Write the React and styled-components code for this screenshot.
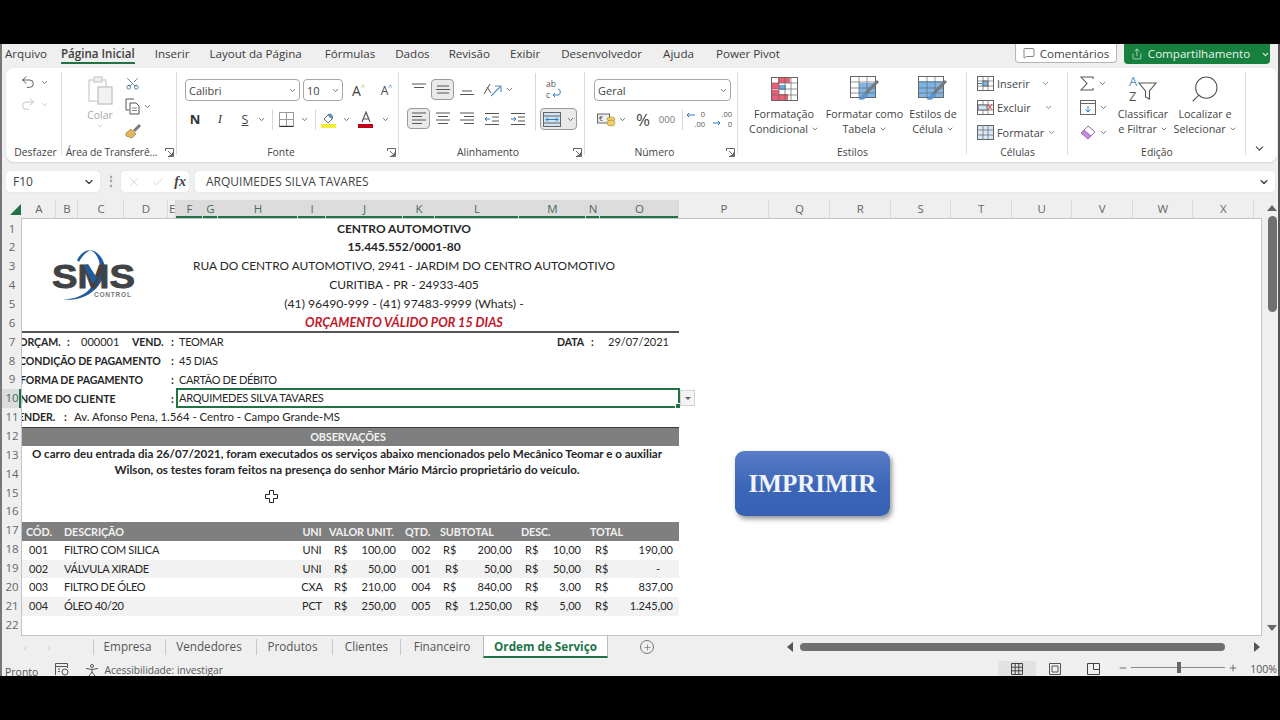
import React from "react";
import styled, { createGlobalStyle } from "styled-components";
import { ChevronDown, Undo2, Redo2, Scissors, X, Check, Search, Plus, Minus, MessageSquare, Share } from "lucide-react";

const Global = createGlobalStyle`
  html, body { margin: 0; padding: 0; background: #000; width: 1280px; height: 720px; overflow: hidden; }
  body { font-family: "Open Sans", "Liberation Sans", sans-serif; }
  * { box-sizing: border-box; }
`;

const Screen = styled.div`
  width: 1280px; height: 720px; background: #000; padding-top: 44px;
`;
const Win = styled.div`
  width: 1280px; height: 632px; background: #efefef; border-left: 2px solid #777; border-right: 2px solid #555; overflow: hidden;
  display: flex; flex-direction: column; position: relative;
`;

/* ---------- top tabs ---------- */
const TabBar = styled.div`
  height: 24px; display: flex; align-items: flex-start; padding-left: 3px; flex: none;
`;
const MenuTab = styled.div`
  height: 20px; line-height: 19px; margin-right: ${p => p.$gap ?? 20}px; font-size: 11.6px; color: #3c3c3c; white-space: nowrap;
  font-weight: ${p => (p.$active ? 600 : 400)};
  border-bottom: ${p => (p.$active ? "2px solid #217346" : "2px solid transparent")};
`;
const TopActions = styled.div`
  margin-left: auto; margin-right: 8px; display: flex; gap: 7px; height: 20px;
`;
const CommentBtn = styled.div`
  width: 102px; height: 19px; background: #fff; border: 1px solid #b5b5b5; border-top: 0; border-radius: 0 0 4px 4px;
  display: flex; align-items: center; justify-content: center; gap: 5px; font-size: 11.6px; color: #444;
`;
const ShareBtn = styled.div`
  width: 146px; height: 20px; background: #17803f; border-radius: 0 0 4px 4px; color: #e6f4ea; line-height: 18px;
  display: flex; align-items: center; padding-left: 7px; gap: 5px; font-size: 11.6px;
`;

/* ---------- ribbon ---------- */
const Ribbon = styled.div`
  height: 94px; margin: 0 1px 0 4px; background: #fff; border-radius: 8px; display: flex; padding: 4px 0 2px; flex: none;
  box-shadow: 0 1px 2px rgba(0,0,0,.12);
`;
const Group = styled.div`
  width: ${p => p.$w}px; flex: none; display: flex; flex-direction: column; position: relative;
  &::after {
    content: ""; position: absolute; right: 0; top: 0; width: 1px; height: 83px;
    background: ${p => (p.$noline ? "transparent" : "#dedede")};
  }
`;
const GroupBody = styled.div`
  flex: 1; display: flex; min-height: 0;
  padding-left: ${p => p.$pl ?? 0}px; gap: ${p => p.$gap ?? 0}px;
`;
const GroupLabel = styled.div`
  height: 16px; line-height: 17px; font-size: 10.4px; color: #444; text-align: center; white-space: nowrap; position: relative;
  padding-right: ${p => p.$pr ?? 0}px; padding-left: ${p => p.$pl ?? 0}px; letter-spacing: ${p => p.$ls ?? 0}px;
`;
const LauncherWrap = styled.span`
  position: absolute; right: 3px; top: 4px; display: inline-flex; line-height: 0;
`;
const Stack = styled.div`
  display: flex; flex-direction: column; align-items: ${p => p.$align ?? "flex-start"};
  gap: ${p => p.$gap ?? 0}px; padding-top: ${p => p.$pt ?? 0}px; width: ${p => (p.$w ? p.$w + "px" : "auto")};
  margin-left: ${p => p.$ml ?? 0}px; flex: none;
`;
const Line = styled.div`
  display: flex; align-items: center; height: ${p => p.$h ?? 22}px; gap: ${p => p.$gap ?? 0}px; margin-left: ${p => p.$ml ?? 0}px;
`;
const TextLine = styled(Line)`
  font-size: 10.9px; color: #444;
`;
const Slot = styled.span`
  display: inline-flex; align-items: center; justify-content: center; flex: none;
  width: ${p => p.$w ?? 24}px; height: ${p => p.$h ?? 21}px; color: ${p => p.$c ?? "#444"};
  font-size: ${p => p.$fs ?? 12}px; font-weight: ${p => p.$fw ?? 400};
  font-family: ${p => p.$ff ?? "inherit"}; font-style: ${p => p.$fst ?? "normal"};
  border-radius: 4px;
  background: ${p => (p.$on ? "#e9e9e9" : "transparent")};
  border: ${p => (p.$on ? "1px solid #9a9a9a" : "0")};
`;
const Vsep = styled.span`
  width: 1px; height: 21px; background: #d8d8d8; flex: none; margin-left: ${p => p.$l ?? 0}px; margin-right: ${p => p.$r ?? 0}px;
`;
const TallSep = styled(Vsep)`
  height: 58px; margin-top: 1px;
`;
const Combo = styled.div`
  width: ${p => p.$w}px; height: 22px; border: 1px solid #a8a8a8; border-radius: 4px; background: #fff; font-size: 11px; color: #444;
  display: flex; align-items: center; justify-content: space-between; padding: 0 2px 0 3px; flex: none;
`;
const Big = styled.div`
  width: ${p => p.$w}px; flex: none; display: flex; flex-direction: column; align-items: center; font-size: 10.8px; color: #444; line-height: 15px; text-align: center; white-space: nowrap;
  margin-left: ${p => p.$ml ?? 0}px;
`;
const BigIcon = styled.div`
  height: 34px; display: flex; align-items: center; justify-content: center; flex: none;
`;
const Faded = styled.span`
  color: #a8a8a8; font-size: 10.5px; line-height: 14px; margin-top: 3px;
`;
const Gap = styled.span`
  display: inline-block; width: ${p => p.$w}px; flex: none;
`;
const Chev = ({ s = 9, c = "#444", sw = 2 }) => <ChevronDown size={s} color={c} strokeWidth={sw} />;
const Launcher = () => (
  <svg width="9" height="9" viewBox="0 0 9 9" fill="none" stroke="#666"><path d="M.5 3V.5H8.5V8.5H3M3 3L7.5 7.5M7.5 4.5V7.5H4.5" /></svg>
);
const Paste = () => (
  <svg width="28" height="30" viewBox="0 0 28 30" fill="none" stroke="#d2d2d2" strokeWidth="1.4">
    <path d="M3 5h5M16 5h4v7M3 5v21h8" /><rect x="8" y="2" width="8" height="5" fill="#eee" /><rect x="12" y="12" width="14" height="17" fill="#f1f1f1" stroke="#c6c6c6" />
  </svg>
);
const Copy = () => (
  <svg width="16" height="17" viewBox="0 0 16 17" fill="none" stroke="#555"><path d="M9 1H1v11h3" /><path d="M5 5h6l3 3v8H5z" /><path d="M7 10h5M7 12.5h5" stroke="#888" /></svg>
);
const Brush = () => (
  <svg width="17" height="16" viewBox="0 0 17 16"><path d="M1 10l5-4 5 5-4 4-6-2z" fill="#e2b65c" stroke="#a0793a" strokeWidth=".7" /><path d="M8 7l6-6 2 2-6 6z" fill="#777" /></svg>
);
const FontGrow = ({ sz, mark }) => (
  <Slot $w={25} $fs={sz} $c="#444">A<small style={{ fontSize: 7, alignSelf: "flex-start", marginTop: 3, color: mark }}>{"^"}</small></Slot>
);
const Borders = () => (
  <svg width="15" height="15" viewBox="0 0 15 15" fill="none" stroke="#999"><path d="M.5.5h14v14H.5zM7.5.5v14M.5 7.5h14" /><path d="M.5 14.5h14" stroke="#333" strokeWidth="1.4" /></svg>
);
const Fill = () => (
  <svg width="16" height="17" viewBox="0 0 16 17"><path d="M3 8l5-5 4 4-5 5z" fill="none" stroke="#666" /><path d="M9 2l3 3-1 3-4-3z" fill="#5e8bbd" /><rect x="0" y="13" width="15" height="4" fill="#f4ee3c" /></svg>
);
const TextColor = () => (
  <svg width="16" height="17" viewBox="0 0 16 17"><path d="M4 11L8 1l4 10M5.5 8h5" fill="none" stroke="#555" strokeWidth="1.2" /><rect x="0" y="13" width="15" height="4" fill="#c00018" /></svg>
);
const Lines = ({ kind, c = "#555" }) => {
  const sets = {
    top: ["1,2,15", "3,5.5,13"],
    mid: ["2,4,14", "1,7.5,15", "2,11,14"],
    bottom: ["3,9,13", "1,12.5,15"],
    left: ["1,2,15", "1,5.5,11", "1,9,15", "1,12.5,11"],
    center: ["1,2,15", "3,5.5,13", "1,9,15", "3,12.5,13"],
    right: ["1,2,15", "5,5.5,15", "1,9,15", "5,12.5,15"],
  };
  return (
    <svg width="16" height="15" viewBox="0 0 16 15" stroke={c} strokeWidth="1" fill="none">
      {sets[kind].map(s => { const [a, y, b] = s.split(",").map(Number); return <path key={s} d={`M${a} ${y}H${b}`} />; })}
    </svg>
  );
};
const Indent = ({ flip }) => (
  <svg width="16" height="14" viewBox="0 0 16 14" fill="none" stroke="#555"><path d="M1 1.5h14M8 5h7M8 9h7M1 12.5h14" /><path d={flip ? "M1 7h5M4 5l2 2-2 2" : "M6 7H1M3 5L1 7l2 2"} stroke="#2b7cc2" /></svg>
);
const Orient = () => (
  <svg width="20" height="18" viewBox="0 0 20 18" fill="none" stroke="#555"><path d="M2 13L8 3M5 6l4 6" /><path d="M9 15L18 6M13 5h6v6" stroke="#4d8fc7" strokeWidth="1.1" /></svg>
);
const Wrap = () => (
  <svg width="17" height="21" viewBox="0 0 17 21"><text x="1" y="8" fontSize="8.5" fontFamily="Open Sans" fill="#555">ab</text><text x="1" y="19" fontSize="8.5" fontFamily="Open Sans" fill="#555">c</text><path d="M8 16h5c3 0 3-6 0-6" fill="none" stroke="#2b7cc2" /><path d="M10 14l-2 2 2 2" fill="none" stroke="#2b7cc2" /></svg>
);
const Merge = () => (
  <svg width="18" height="15" viewBox="0 0 18 15" fill="none" stroke="#666"><rect x=".5" y=".5" width="17" height="14" fill="#cfe3f5" /><path d="M.5 4h17M.5 11h17" /><path d="M3 7.5h12M5 5.5l-2 2 2 2M13 5.5l2 2-2 2" stroke="#2b7cc2" /></svg>
);
const Accounting = () => (
  <svg width="19" height="15" viewBox="0 0 19 15"><rect x=".5" y="2" width="12" height="9" fill="#eee" stroke="#666" /><text x="2" y="9" fontSize="7" fill="#444" fontFamily="Open Sans">€</text><ellipse cx="14" cy="7" rx="4" ry="2" fill="#f2cf6a" stroke="#a68327" strokeWidth=".6" /><ellipse cx="14" cy="11" rx="4" ry="3" fill="#f2cf6a" stroke="#a68327" strokeWidth=".6" /></svg>
);
const Dec = ({ up }) => (
  <svg width="22" height="19" viewBox="0 0 22 19" fontFamily="Open Sans" fontSize="7.5" fill="#555">
    <text x="21" y="7" textAnchor="end">{up ? ".00" : "0"}</text><text x="21" y="17" textAnchor="end">{up ? "0" : ".00"}</text>
    {up ? <path d="M2 13h7M7 11l2 2-2 2" fill="none" stroke="#2b7cc2" /> : <path d="M11 5H3M5 3L3 5l2 2" fill="none" stroke="#2b7cc2" />}
  </svg>
);
const CondFormat = () => (
  <svg width="27" height="24" viewBox="0 0 27 24" fill="none">
    <rect x=".5" y=".5" width="26" height="23" fill="#fff" stroke="#666" />
    <rect x="7" y="1" width="12" height="5" fill="#ea5f75" /><rect x="1" y="6" width="7" height="6" fill="#ea5f75" /><rect x="8" y="8" width="7" height="5" fill="#6ea8dc" /><rect x="1" y="13" width="7" height="4" fill="#ea5f75" /><rect x="1" y="17" width="16" height="6" fill="#ea5f75" />
    <path d="M.5 6h26M.5 12h26M.5 18h26M8 .5v23M14 .5v23M20 .5v23" stroke="#666" strokeWidth=".7" />
  </svg>
);
const TableFormat = ({ cell }) => (
  <svg width="30" height="26" viewBox="0 0 30 26" fill="none">
    <rect x=".5" y=".5" width="25" height="21" fill={cell ? "#7db5e6" : "#fff"} stroke="#666" />
    {cell ? <rect x="1" y="1" width="24" height="4" fill="#fff" /> : <rect x="9" y="7" width="16" height="14" fill="#7db5e6" />}
    <path d="M.5 6h25M.5 12h25M.5 17h25M9 .5v21M17 .5v21" stroke="#666" strokeWidth=".7" />
    <path d="M28 5L15 18" stroke="#777" strokeWidth="3" /><path d="M15 17c-4 0-3 5-7 6 4 2 9 0 9-4z" fill="#5795cf" />
  </svg>
);
const CellIcon = ({ type }) => (
  <svg width="17" height="15" viewBox="0 0 17 15" fill="none" stroke="#666">
    <rect x=".5" y=".5" width="16" height="14" fill={type === "fmt" ? "#d6e7f6" : "#fff"} />
    <path d="M.5 5h16M.5 10h16M6 .5v14M11 .5v14" strokeWidth=".7" />
    {type === "ins" && <><rect x="6" y="5" width="5" height="5" fill="#7db5e6" /><path d="M1 7.5h4" stroke="#2b7cc2" /></>}
    {type === "del" && <><rect x="1" y="5" width="9" height="5" fill="#cfe3f5" /><path d="M11 4l4 6M15 4l-4 6" stroke="#d0464f" /></>}
  </svg>
);
const Sigma = () => (
  <svg width="14" height="15" viewBox="0 0 14 15" fill="none" stroke="#555" strokeWidth="1.1"><path d="M13 3V1H1l6 6.5L1 14h12v-2" /></svg>
);
const FillDown = () => (
  <svg width="16" height="15" viewBox="0 0 16 15" fill="none" stroke="#666"><rect x=".5" y=".5" width="15" height="14" /><path d="M.5 3.5h15" /><path d="M8 6v6M5.5 9.5L8 12l2.5-2.5" stroke="#2b7cc2" /></svg>
);
const Eraser = () => (
  <svg width="16" height="15" viewBox="0 0 16 15"><path d="M8 1l7 6-7 7-7-6z" fill="#c48ad8" stroke="#8b4aa3" strokeWidth=".7" /><path d="M8 1l7 6-4 4-7-6z" fill="#fff" stroke="#8b4aa3" strokeWidth=".7" /></svg>
);
const SortIcon = () => (
  <svg width="30" height="30" viewBox="0 0 30 30" fill="none">
    <text x="1" y="12" fontSize="13" fontFamily="Open Sans" fill="#5b8fc4">A</text>
    <text x="1" y="27" fontSize="13" fontFamily="Open Sans" fill="#555">Z</text>
    <path d="M11 9h17l-6.5 8v8l-4-2v-6z" stroke="#555" strokeWidth="1.1" />
  </svg>
);

/* ---------- formula bar ---------- */
const FormulaBar = styled.div`
  margin-top: 9px; height: 21px; display: flex; align-items: stretch; padding-left: 4px; padding-right: 3px; flex: none;
`;
const Box = styled.div`
  background: #fff; border-radius: 4px; display: flex; align-items: center; width: ${p => (p.$w ? p.$w + "px" : "auto")}; flex: ${p => (p.$grow ? 1 : "none")};
  padding: 0 ${p => p.$pr ?? 5}px 0 ${p => p.$pl ?? 7}px; font-size: 12px; color: #444; justify-content: space-between;
  margin-left: ${p => p.$ml ?? 0}px;
  box-shadow: 0 0 1px rgba(0,0,0,.2);
`;
const Dots = styled.div`
  width: 21px; flex: none; text-align: center; color: #999; font-size: 12px; font-weight: 700; line-height: 19px;
`;
const Fx = styled.span`
  font-family: "Liberation Serif", serif; font-style: italic; font-weight: 700; font-size: 14px; color: #444;
`;

/* ---------- sheet ---------- */
const COLS = "34px 22px 46px 44px 8px 27px 15px 80px 28px 77px 32px 84px 67px 14px 79px 90px 61px 60.5px 60.5px 60.5px 60.5px 60.5px 60.5px 60.5px 8px";
const ROW_H = 18.86;
const GRID_ROW_H = 18.9;
const SheetArea = styled.div`
  margin-top: 8px; height: 436px; display: flex; flex: none;
`;
const SheetMain = styled.div`
  width: 1260px; display: flex; flex-direction: column; flex: none;
`;
const ColHead = styled.div`
  height: 18px; display: flex; flex: none;
`;
const Corner = styled.div`
  width: 20px; flex: none; display: flex; align-items: center; justify-content: flex-end; padding-right: 1px;
`;
const ColTrack = styled.div`
  display: grid; grid-template-columns: ${COLS}; flex: 1;
`;
const ColCell = styled.div`
  font-size: 11.5px; line-height: 18px; text-align: center; color: ${p => (p.$sel ? "#4d6b58" : "#666")};
  background: ${p => (p.$sel ? "#dcdcdc" : "transparent")};
  box-shadow: ${p => (p.$sel ? "inset 0 -2px 0 #217346" : "none")};
  border-right: 1px solid #dadada; padding-left: 1px;
  overflow: hidden;
`;
const SheetBody = styled.div`
  flex: 1; display: flex; min-height: 0;
`;
const RowHead = styled.div`
  width: 19px; flex: none; padding-top: 1.5px;
`;
const RowNum = styled.div`
  height: ${ROW_H}px; line-height: ${ROW_H}px; font-size: 11.5px; color: ${p => (p.$sel ? "#3d6b50" : "#666")}; text-align: center; padding-left: 1px;
  background: ${p => (p.$sel ? "#dcdcdc" : "transparent")};
  box-shadow: ${p => (p.$sel ? "inset -2px 0 0 #217346" : "none")};
`;
const Grid = styled.div`
  flex: 1; background: #fff; border: 1px solid #c4c4c4; position: relative; overflow: hidden;
  display: grid; grid-template-columns: ${COLS}; grid-template-rows: repeat(23, ${GRID_ROW_H}px);
  padding-top: .5px;
  font-family: Lato, Carlito, sans-serif; font-size: 11px; color: #262626;
`;
const Cell = styled.div`
  grid-column: ${p => p.$col}; grid-row: ${p => p.$row};
  white-space: nowrap; line-height: ${ROW_H}px; font-weight: ${p => (p.$b ? 700 : 400)};
  text-align: ${p => p.$align ?? "left"};
  padding-left: ${p => p.$pl ?? 0}px; padding-right: ${p => p.$pr ?? 0}px;
  margin-left: ${p => p.$ml ?? 0}px;
  color: ${p => p.$color ?? "inherit"};
  font-size: ${p => (p.$fs ? p.$fs + "px" : "inherit")};
  font-style: ${p => (p.$i ? "italic" : "normal")};
  letter-spacing: ${p => p.$ls ?? 0}px;
`;
const TitleCell = styled(Cell)`
  grid-column: 1 / 16; text-align: center; padding-left: 107px; line-height: 17.5px;
`;
const FieldLabel = styled(Cell)`
  font-weight: 700; font-size: 10.6px; letter-spacing: -.1px; word-spacing: ${p => p.$ws ?? 0}px;
`;
const Band = styled.div`
  grid-column: 1 / 16; grid-row: ${p => p.$row}; background: ${p => p.$bg};
  border-top: ${p => (p.$line ? "1px solid #3c3c3c" : "0")};
`;
const Rule = styled.div`
  grid-column: 1 / 16; grid-row: ${p => p.$row}; align-self: end; height: 2px; background: #555;
`;
const White = styled(Cell)`color: #f1f1f1; font-size: 10.8px; font-weight: 700; letter-spacing: -.1px; line-height: 19px;`;
const LogoCell = styled.div`
  grid-column: 1 / 7; grid-row: 1 / 7; padding: 26px 0 0 28px;
`;
const Selection = styled.div`
  grid-column: 6 / 16; grid-row: 10; border: 2px solid #217346; margin: -1.5px -1px 0 0; padding-left: 1px; line-height: 15px; position: relative;
  overflow: visible; white-space: nowrap; letter-spacing: -.25px;
`;
const Handle = styled.span`
  position: absolute; right: -3px; bottom: -3px; width: 6px; height: 6px; background: #217346; border: 1px solid #fff;
`;
const Dropdown = styled.span`
  position: absolute; left: 100%; margin-left: 2px; top: 0; width: 15px; height: 16px; background: #f4f4f4; border: 1px solid #d4d4d4;
  display: flex; align-items: center; justify-content: center;
`;
const Tri = styled.span`
  width: 0; height: 0; border-left: 3px solid transparent; border-right: 3px solid transparent; border-top: 3px solid #666;
`;
const Notes = styled.div`
  grid-column: 1 / 16; grid-row: 13 / 16; text-align: center; font-weight: 700; line-height: 16px; padding: 0 7px 0 0; font-size: 11.58px;
  white-space: nowrap;
`;
const PrintSlot = styled.div`
  grid-column: 16 / 19; grid-row: 13 / 17; padding: 5px 0 0 56px;
`;
const PrintBtn = styled.div`
  width: 155px; height: 65px; border-radius: 9px; background: linear-gradient(#5a7cc6, #3b66b8 55%, #3861b3);
  color: #f1f5fb; font-family: "Liberation Serif", serif; font-weight: 700; font-size: 25px; display: flex; align-items: center; justify-content: center;
  box-shadow: 2px 3px 5px rgba(60,60,60,.55);
`;
const CursorMark = styled.div`
  position: absolute; left: 243px; top: 271px; line-height: 0;
`;
const VScroll = styled.div`
  width: 16px; flex: none; display: flex; flex-direction: column; align-items: center; padding-left: 4px;
`;
const Arrow = styled.span`
  width: 0; height: 0; flex: none;
  margin-top: ${p => p.$mt ?? 0}px; margin-bottom: ${p => p.$mb ?? 0}px;
  ${p => p.$dir === "up" && `border-left:5px solid transparent;border-right:5px solid transparent;border-bottom:6px solid #666;`}
  ${p => p.$dir === "down" && `border-left:5px solid transparent;border-right:5px solid transparent;border-top:6px solid #666;`}
  ${p => p.$dir === "left" && `border-top:5px solid transparent;border-bottom:5px solid transparent;border-right:6px solid #555;`}
  ${p => p.$dir === "right" && `border-top:5px solid transparent;border-bottom:5px solid transparent;border-left:6px solid #555;`}
`;
const VThumb = styled.div`
  width: 9px; height: 96px; background: #707070; border-radius: 5px; margin-top: 5px;
`;
const VSpace = styled.div`flex: 1;`;

/* ---------- sheet tabs ---------- */
const SheetTabs = styled.div`
  height: 22px; display: flex; align-items: center; flex: none; font-size: 11.7px; color: #555;
`;
const NavArrows = styled.div`
  width: 91px; flex: none; display: flex; gap: 21px; padding-left: 22px; color: #c4c4c4; font-size: 9px;
`;
const SheetTab = styled.div`
  height: 22px; line-height: 21px; width: ${p => p.$w}px; text-align: center; flex: none; white-space: nowrap;
  padding-right: ${p => p.$pr ?? 0}px;
  ${p => p.$active ? `
    background: #fff; color: #217346; font-weight: 700; border: 1px solid #bbb; border-top: 0; border-bottom: 2px solid #217346;
  ` : ""}
`;
const TabSep = styled.span`
  width: 1px; height: 16px; background: #c8c8c8; flex: none;
`;
const PlusCircle = styled.div`
  width: 14px; height: 14px; border: 1px solid #777; border-radius: 50%; margin-left: 32px; display: flex; align-items: center; justify-content: center; flex: none;
`;
const HScroll = styled.div`
  margin-left: auto; display: flex; align-items: center; margin-right: 18px; flex: none;
`;
const HThumb = styled.div`
  width: 425px; height: 8px; background: #707070; border-radius: 4px; margin: 0 29px 0 7px;
`;

/* ---------- status bar ---------- */
const StatusBar = styled.div`
  height: 18px; display: flex; font-size: 10.5px; color: #555; padding-left: 3px; flex: none;
`;
const StatusText = styled.span`
  line-height: ${p => p.$lh ?? 24}px; font-size: ${p => p.$fs ?? 10.2}px; margin-left: ${p => p.$ml ?? 0}px; white-space: nowrap; color: ${p => p.$c ?? "#555"};
`;
const StatusIcon = styled.span`
  margin-left: ${p => p.$ml ?? 0}px; padding-top: 5px; line-height: 0; flex: none;
`;
const ViewBtns = styled.div`
  margin-left: auto; display: flex; align-items: flex-end; margin-right: 1px;
`;
const ViewBtn = styled.div`
  width: 38px; height: 15px; display: flex; align-items: flex-start; justify-content: center; background: ${p => (p.$on ? "#e2e2e2" : "transparent")};
  padding-top: 2px; flex: none;
`;
const ZoomTrack = styled.div`
  width: 94px; height: 1px; background: #888; position: relative; margin: 0 3px 8px 3px;
`;
const ZoomKnob = styled.span`
  position: absolute; left: 46px; top: -5px; width: 4px; height: 11px; background: #666;
`;

const colNames = "A B C D E F G H I J K L M N O P Q R S T U V W X".split(" ");
const selCols = new Set("F G H I J K L M N O".split(" "));

const Data = [
  { r: 18, code: "001", d: "FILTRO COM SILICA", u: "UNI", v: "100,00", q: "002", s: "200,00", de: "10,00", t: "190,00" },
  { r: 19, code: "002", d: "VÁLVULA XIRADE", u: "UNI", v: "50,00", q: "001", s: "50,00", de: "50,00", t: "-", dash: true, rs: 10 },
  { r: 20, code: "003", d: "FILTRO DE ÓLEO", u: "CXA", v: "210,00", q: "004", s: "840,00", de: "3,00", t: "837,00" },
  { r: 21, code: "004", d: "ÓLEO 40/20", u: "PCT", v: "250,00", q: "005", s: "1.250,00", de: "5,00", t: "1.245,00", rs: 10 },
];

const Logo = () => (
  <svg width="92" height="60" viewBox="0 0 92 60">
    <path d="M13 53C30 54 46 44 50 22C50 14 46 6 40 4C46 4 55 12 55 24C53 42 34 57 13 53Z" fill="#1f5c9e" />
    <path d="M27 14C30 8 35 4 41 4C36 6 32 10 29 16Z" fill="#1f5c9e" />
    <text x="2" y="42" fontFamily="Liberation Sans" fontWeight="700" fontSize="33" fill="#414246" stroke="#414246" strokeWidth=".9" textLength="83" lengthAdjust="spacingAndGlyphs">SMS</text>
    <path d="M34 20L43 38L47 32L38 18Z" fill="#1f5c9e" />
    <text x="44" y="51" fontFamily="Liberation Sans" fontSize="6.6" fontWeight="700" fill="#77797d" textLength="37" lengthAdjust="spacing">CONTROL</text>
  </svg>
);

export default function App() {
  return (
    <Screen>
      <Global />
      <Win>
        <TabBar>
          <MenuTab $gap={14}>Arquivo</MenuTab>
          <MenuTab $active>Página Inicial</MenuTab>
          <MenuTab>Inserir</MenuTab>
          <MenuTab $gap={23}>Layout da Página</MenuTab>
          <MenuTab>Fórmulas</MenuTab>
          <MenuTab $gap={19}>Dados</MenuTab>
          <MenuTab>Revisão</MenuTab>
          <MenuTab $gap={21}>Exibir</MenuTab>
          <MenuTab $gap={21}>Desenvolvedor</MenuTab>
          <MenuTab $gap={22}>Ajuda</MenuTab>
          <MenuTab>Power Pivot</MenuTab>
          <TopActions>
            <CommentBtn><MessageSquare size={12} strokeWidth={1.3} />Comentários</CommentBtn>
            <ShareBtn><Share size={12} strokeWidth={1.4} />Compartilhamento<ChevronDown size={9} strokeWidth={3} style={{ marginLeft: 6 }} /></ShareBtn>
          </TopActions>
        </TabBar>

        <Ribbon>
          <Group $w={56}>
            <GroupBody $pl={12}>
              <Stack>
                <Line $h={20} $gap={2}><Slot $w={20}><Undo2 size={16} strokeWidth={1.3} color="#444" /></Slot><Chev /></Line>
                <Line $h={24} $gap={2}><Slot $w={20}><Redo2 size={16} strokeWidth={1.3} color="#bbb" /></Slot><Chev c="#bbb" /></Line>
              </Stack>
            </GroupBody>
            <GroupLabel $pl={3}>Desfazer</GroupLabel>
          </Group>

          <Group $w={115}>
            <GroupBody $pl={24}>
              <Stack $align="center" $w={28} $pt={3}>
                <Paste />
                <Faded>Colar</Faded>
                <Chev s={8} c="#b5b5b5" />
              </Stack>
              <Stack $ml={11}>
                <Line $h={22}><Scissors size={15} strokeWidth={1.2} color="#2f5f8f" style={{ transform: "rotate(-90deg)" }} /></Line>
                <Line $h={24} $gap={2}><Copy /><Chev /></Line>
                <Line $h={26}><Brush /></Line>
              </Stack>
            </GroupBody>
            <GroupLabel $pr={16} $ls={-.15}>Área de Transferê...<LauncherWrap><Launcher /></LauncherWrap></GroupLabel>
          </Group>

          <Group $w={222}>
            <GroupBody $pl={8}>
              <Stack $pt={7} $gap={7}>
                <Line $h={22} $gap={3}>
                  <Combo $w={115}>Calibri<Chev /></Combo>
                  <Combo $w={40}>10<Chev /></Combo>
                  <FontGrow sz={14} mark="#c9a227" />
                  <FontGrow sz={12} mark="#3b7dc4" />
                </Line>
                <Line $h={22} $ml={-2}>
                  <Slot $w={24} $fs={13} $fw={700} $c="#333">N</Slot>
                  <Slot $w={26} $fs={13} $fst="italic" $ff="'Liberation Serif', serif">I</Slot>
                  <Slot $w={24} $fs={12.5} style={{ textDecoration: "underline" }}>S</Slot>
                  <Chev />
                  <Vsep $l={6} $r={3} />
                  <Slot $w={20}><Borders /></Slot>
                  <Slot $w={17}><Chev /></Slot>
                  <Vsep $l={2} />
                  <Slot $w={26}><Fill /></Slot>
                  <Chev />
                  <Slot $w={30}><TextColor /></Slot>
                  <Chev />
                </Line>
              </Stack>
            </GroupBody>
            <GroupLabel $pr={14}>Fonte<LauncherWrap><Launcher /></LauncherWrap></GroupLabel>
          </Group>

          <Group $w={186}>
            <GroupBody $pl={8}>
              <Stack $pt={7} $gap={8}>
                <Line $h={21} $gap={1}>
                  <Slot $w={23}><Lines kind="top" /></Slot>
                  <Slot $w={23} $on><Lines kind="mid" /></Slot>
                  <Slot $w={24}><Lines kind="bottom" /></Slot>
                  <Slot $w={24}><Orient /></Slot>
                  <Chev />
                </Line>
                <Line $h={21} $gap={1}>
                  <Slot $w={23} $on><Lines kind="left" /></Slot>
                  <Slot $w={23}><Lines kind="center" /></Slot>
                  <Slot $w={24}><Lines kind="right" /></Slot>
                  <Slot $w={24}><Indent /></Slot>
                  <Slot $w={25}><Indent flip /></Slot>
                </Line>
              </Stack>
              <TallSep $l={5} $r={4} />
              <Stack $pt={7} $gap={8} $align="center">
                <Line $h={21} $ml={-10}><Wrap /></Line>
                <Line $h={22}>
                  <Slot $w={37} $h={22} $on style={{ gap: 5 }}><Merge /><Chev /></Slot>
                </Line>
              </Stack>
            </GroupBody>
            <GroupLabel $pr={8}>Alinhamento<LauncherWrap><Launcher /></LauncherWrap></GroupLabel>
          </Group>

          <Group $w={153}>
            <GroupBody $pl={9}>
              <Stack $pt={7} $gap={7}>
                <Combo $w={137}>Geral<Chev /></Combo>
                <Line $h={22}>
                  <Slot $w={24}><Accounting /></Slot>
                  <Chev />
                  <Slot $w={32} $fs={17}>%</Slot>
                  <Slot $w={16} $fs={9.5} $c="#777">000</Slot>
                  <Vsep $l={7} />
                  <Slot $w={24}><Dec /></Slot>
                  <Slot $w={30}><Dec up /></Slot>
                </Line>
              </Stack>
            </GroupBody>
            <GroupLabel $pr={14}>Número<LauncherWrap><Launcher /></LauncherWrap></GroupLabel>
          </Group>

          <Group $w={229}>
            <GroupBody>
              <Big $w={92}>
                <BigIcon><CondFormat /></BigIcon>
                Formatação<br />
                <span>Condicional <Chev s={8} /></span>
              </Big>
              <Big $w={69}>
                <BigIcon><TableFormat /></BigIcon>
                Formatar como<br />
                <span>Tabela <Chev s={8} /></span>
              </Big>
              <Big $w={68}>
                <BigIcon><TableFormat cell /></BigIcon>
                Estilos de<br />
                <span>Célula <Chev s={8} /></span>
              </Big>
            </GroupBody>
            <GroupLabel>Estilos</GroupLabel>
          </Group>

          <Group $w={101}>
            <GroupBody $pl={10}>
              <Stack>
                <TextLine $h={22} $gap={3}><CellIcon type="ins" />Inserir<Gap $w={5} /><Chev c="#666" /></TextLine>
                <TextLine $h={26} $gap={3}><CellIcon type="del" />Excluir<Gap $w={7} /><Chev c="#666" /></TextLine>
                <TextLine $h={24} $gap={3}><CellIcon type="fmt" />Formatar<Chev c="#666" /></TextLine>
              </Stack>
            </GroupBody>
            <GroupLabel>Células</GroupLabel>
          </Group>

          <Group $w={178}>
            <GroupBody $pl={12}>
              <Stack>
                <Line $h={22} $gap={4}><Sigma /><Chev /></Line>
                <Line $h={26} $gap={3}><FillDown /><Chev /></Line>
                <Line $h={24} $gap={3}><Eraser /><Chev /></Line>
              </Stack>
              <Big $w={62} $ml={4}>
                <BigIcon><SortIcon /></BigIcon>
                Classificar<br />
                <span>e Filtrar <Chev s={8} /></span>
              </Big>
              <Big $w={62}>
                <BigIcon><Search size={32} strokeWidth={.8} color="#555" style={{ transform: "scaleX(-1)" }} /></BigIcon>
                Localizar e<br />
                <span>Selecionar <Chev s={8} /></span>
              </Big>
            </GroupBody>
            <GroupLabel>Edição</GroupLabel>
          </Group>

          <Group $w={27} $noline style={{ justifyContent: "flex-end", alignItems: "center", paddingBottom: 5 }}>
            <ChevronDown size={13} strokeWidth={2} color="#444" />
          </Group>
        </Ribbon>

        <FormulaBar>
          <Box $w={94}>F10<ChevronDown size={12} strokeWidth={2.2} color="#333" /></Box>
          <Dots>⋮</Dots>
          <Box $w={68} $pl={6} $pr={3}>
            <X size={14} strokeWidth={1} color="#bbb" />
            <Check size={14} strokeWidth={1} color="#bbb" />
            <Fx>fx</Fx>
          </Box>
          <Box $grow $ml={6} $pl={11}>
            ARQUIMEDES SILVA TAVARES
            <ChevronDown size={12} strokeWidth={2.2} color="#333" />
          </Box>
        </FormulaBar>

        <SheetArea>
          <SheetMain>
            <ColHead>
              <Corner>
                <svg width="11" height="11" viewBox="0 0 11 11"><path d="M11 0V11H0Z" fill="#217346" /></svg>
              </Corner>
              <ColTrack>
                {colNames.map(c => <ColCell key={c} $sel={selCols.has(c)}>{c}</ColCell>)}
              </ColTrack>
            </ColHead>
            <SheetBody>
              <RowHead>
                {Array.from({ length: 22 }, (_, i) => <RowNum key={i} $sel={i === 9}>{i + 1}</RowNum>)}
              </RowHead>
              <Grid>
                <LogoCell><Logo /></LogoCell>
                <TitleCell $row={1} $b $fs={12}>CENTRO AUTOMOTIVO</TitleCell>
                <TitleCell $row={2} $b $fs={12}>15.445.552/0001-80</TitleCell>
                <TitleCell $row={3} $fs={11.9}>RUA DO CENTRO AUTOMOTIVO, 2941 - JARDIM DO CENTRO AUTOMOTIVO</TitleCell>
                <TitleCell $row={4} $fs={12}>CURITIBA - PR - 24933-405</TitleCell>
                <TitleCell $row={5} $fs={12.2}>(41) 96490-999 - (41) 97483-9999 (Whats) -</TitleCell>
                <TitleCell $row={6} $b $i $fs={12.7} $color="#c0172a">ORÇAMENTO VÁLIDO POR 15 DIAS</TitleCell>
                <Rule $row={6} />

                <FieldLabel $col="1 / 3" $row={7} $ml={-3} $ws={4}>ORÇAM. :</FieldLabel>
                <Cell $col="3 / 4" $row={7} $pl={3}>000001</Cell>
                <FieldLabel $col="4 / 5" $row={7} $pl={8}>VEND.</FieldLabel>
                <Cell $col="5 / 6" $row={7} $ml={3} $b>:</Cell>
                <Cell $col="6 / 8" $row={7} $pl={3} $ls={-.3}>TEOMAR</Cell>
                <FieldLabel $col="13 / 15" $row={7} $pl={38} $ws={5}>DATA :</FieldLabel>
                <Cell $col="14 / 16" $row={7} $pl={22}>29/07/2021</Cell>

                <FieldLabel $col="1 / 5" $row={8} $ml={-3}>CONDIÇÃO DE PAGAMENTO</FieldLabel>
                <Cell $col="5 / 6" $row={8} $ml={3} $b>:</Cell>
                <Cell $col="6 / 9" $row={8} $pl={3} $ls={-.25}>45 DIAS</Cell>

                <FieldLabel $col="1 / 5" $row={9} $ml={-2}>FORMA DE PAGAMENTO</FieldLabel>
                <Cell $col="5 / 6" $row={9} $ml={3} $b>:</Cell>
                <Cell $col="6 / 9" $row={9} $pl={3} $ls={-.35}>CARTÃO DE DÉBITO</Cell>

                <FieldLabel $col="1 / 5" $row={10} $ml={-2}>NOME DO CLIENTE</FieldLabel>
                <Cell $col="5 / 6" $row={10} $ml={3} $b>:</Cell>
                <Selection>
                  ARQUIMEDES SILVA TAVARES
                  <Handle />
                  <Dropdown><Tri /></Dropdown>
                </Selection>

                <FieldLabel $col="1 / 3" $row={11} $ml={-4}>ENDER.</FieldLabel>
                <Cell $col="2 / 3" $row={11} $pl={8} $b>:</Cell>
                <Cell $col="2 / 12" $row={11} $pl={18} $fs={11.4}>Av. Afonso Pena, 1.564 - Centro - Campo Grande-MS</Cell>

                <Band $row={12} $bg="#7f7f7f" $line />
                <White $col="1 / 16" $row={12} $align="center" $pr={5}>OBSERVAÇÕES</White>

                <Notes>
                  O carro deu entrada dia 26/07/2021, foram executados os serviços abaixo mencionados pelo Mecânico Teomar e o auxiliar<br />
                  Wilson, os testes foram feitos na presença do senhor Mário Márcio proprietário do veículo.
                </Notes>

                <Band $row={17} $bg="#7f7f7f" />
                <White $col="1 / 3" $row={17} $pl={4}>CÓD.</White>
                <White $col="2 / 8" $row={17} $pl={8}>DESCRIÇÃO</White>
                <White $col="9 / 10" $row={17} $align="center">UNI</White>
                <White $col="10 / 11" $row={17} $pl={3}>VALOR UNIT.</White>
                <White $col="11 / 12" $row={17} $pl={2}>QTD.</White>
                <White $col="12 / 13" $row={17} $pl={5}>SUBTOTAL</White>
                <White $col="13 / 14" $row={17} $pl={2}>DESC.</White>
                <White $col="14 / 16" $row={17} $pl={4}>TOTAL</White>

                <Band $row={19} $bg="#f2f2f2" />
                <Band $row={21} $bg="#f2f2f2" />
                {Data.map(d => (
                  <React.Fragment key={d.r}>
                    <Cell $col="1 / 2" $row={d.r} $pl={7}>{d.code}</Cell>
                    <Cell $col="2 / 8" $row={d.r} $pl={8} $ls={-.32}>{d.d}</Cell>
                    <Cell $col="9 / 10" $row={d.r} $align="center" $ls={-.2}>{d.u}</Cell>
                    <Cell $col="10 / 11" $row={d.r} $pl={8}>R$</Cell>
                    <Cell $col="10 / 11" $row={d.r} $align="right" $pr={7}>{d.v}</Cell>
                    <Cell $col="11 / 12" $row={d.r} $align="center" $pl={4}>{d.q}</Cell>
                    <Cell $col="12 / 13" $row={d.r} $pl={d.rs ?? 8}>R$</Cell>
                    <Cell $col="12 / 13" $row={d.r} $align="right" $pr={7}>{d.s}</Cell>
                    <Cell $col="13 / 14" $row={d.r} $pl={6}>R$</Cell>
                    <Cell $col="13 / 14" $row={d.r} $align="right" $pr={5}>{d.de}</Cell>
                    <Cell $col="14 / 16" $row={d.r} $pl={9}>R$</Cell>
                    <Cell $col="15 / 16" $row={d.r} $align="right" $pr={d.dash ? 19 : 6}>{d.t}</Cell>
                  </React.Fragment>
                ))}

                <PrintSlot><PrintBtn>IMPRIMIR</PrintBtn></PrintSlot>
                <CursorMark>
                  <svg width="13" height="13" viewBox="0 0 13 13"><path d="M4.5.5h4v4h4v4h-4v4h-4v-4h-4v-4h4z" fill="#fff" stroke="#222" /></svg>
                </CursorMark>
              </Grid>
            </SheetBody>
          </SheetMain>
          <VScroll>
            <Arrow $dir="up" $mt={5} />
            <VThumb />
            <VSpace />
            <Arrow $dir="down" $mb={5} />
          </VScroll>
        </SheetArea>

        <SheetTabs>
          <NavArrows><span>‹</span><span>›</span></NavArrows>
          <TabSep />
          <SheetTab $w={71} $pr={4}>Empresa</SheetTab>
          <TabSep />
          <SheetTab $w={90} $pr={4}>Vendedores</SheetTab>
          <TabSep />
          <SheetTab $w={75} $pr={4}>Produtos</SheetTab>
          <TabSep />
          <SheetTab $w={67}>Clientes</SheetTab>
          <TabSep />
          <SheetTab $w={82}>Financeiro</SheetTab>
          <SheetTab $active $w={125}>Ordem de Serviço</SheetTab>
          <PlusCircle><Plus size={9} strokeWidth={1.5} color="#555" /></PlusCircle>
          <HScroll>
            <Arrow $dir="left" />
            <HThumb />
            <Arrow $dir="right" />
          </HScroll>
        </SheetTabs>

        <StatusBar>
          <StatusText $fs={10.5} $lh={28}>Pronto</StatusText>
          <StatusIcon $ml={17}>
            <svg width="14" height="13" viewBox="0 0 14 13" fill="none" stroke="#555"><path d="M.5 12V.5h12V5M.5 3.5h12M3 6h2M3 8.5h2" /><circle cx="10" cy="9" r="3" /></svg>
          </StatusIcon>
          <StatusIcon $ml={16}>
            <svg width="14" height="14" viewBox="0 0 14 14" fill="none" stroke="#555"><circle cx="7" cy="3" r="1.5" /><path d="M1 5.5l6 1 6-1M7 6.5V9l-3 4M7 9l3 4" /></svg>
          </StatusIcon>
          <StatusText $ml={5}>Acessibilidade: investigar</StatusText>
          <ViewBtns>
            <ViewBtn $on><svg width="12" height="12" viewBox="0 0 12 12" fill="none" stroke="#444"><path d="M.5.5h11v11H.5zM4.2.5v11M7.8.5v11M.5 4.2h11M.5 7.8h11" /></svg></ViewBtn>
            <ViewBtn><svg width="12" height="12" viewBox="0 0 12 12" fill="none" stroke="#555"><path d="M.5.5h11v11H.5zM3 3h6v6H3z" /></svg></ViewBtn>
            <ViewBtn><svg width="13" height="12" viewBox="0 0 13 12" fill="none" stroke="#444"><path d="M.5.5h12v11H.5zM6.5.5v6h6" /></svg></ViewBtn>
            <Minus size={10} color="#555" style={{ marginLeft: 6, marginBottom: 3 }} />
            <ZoomTrack><ZoomKnob /></ZoomTrack>
            <Plus size={10} color="#555" style={{ marginBottom: 3 }} />
            <StatusText $ml={12} $fs={10.5} $lh={14}>100%</StatusText>
          </ViewBtns>
        </StatusBar>
      </Win>
    </Screen>
  );
}
